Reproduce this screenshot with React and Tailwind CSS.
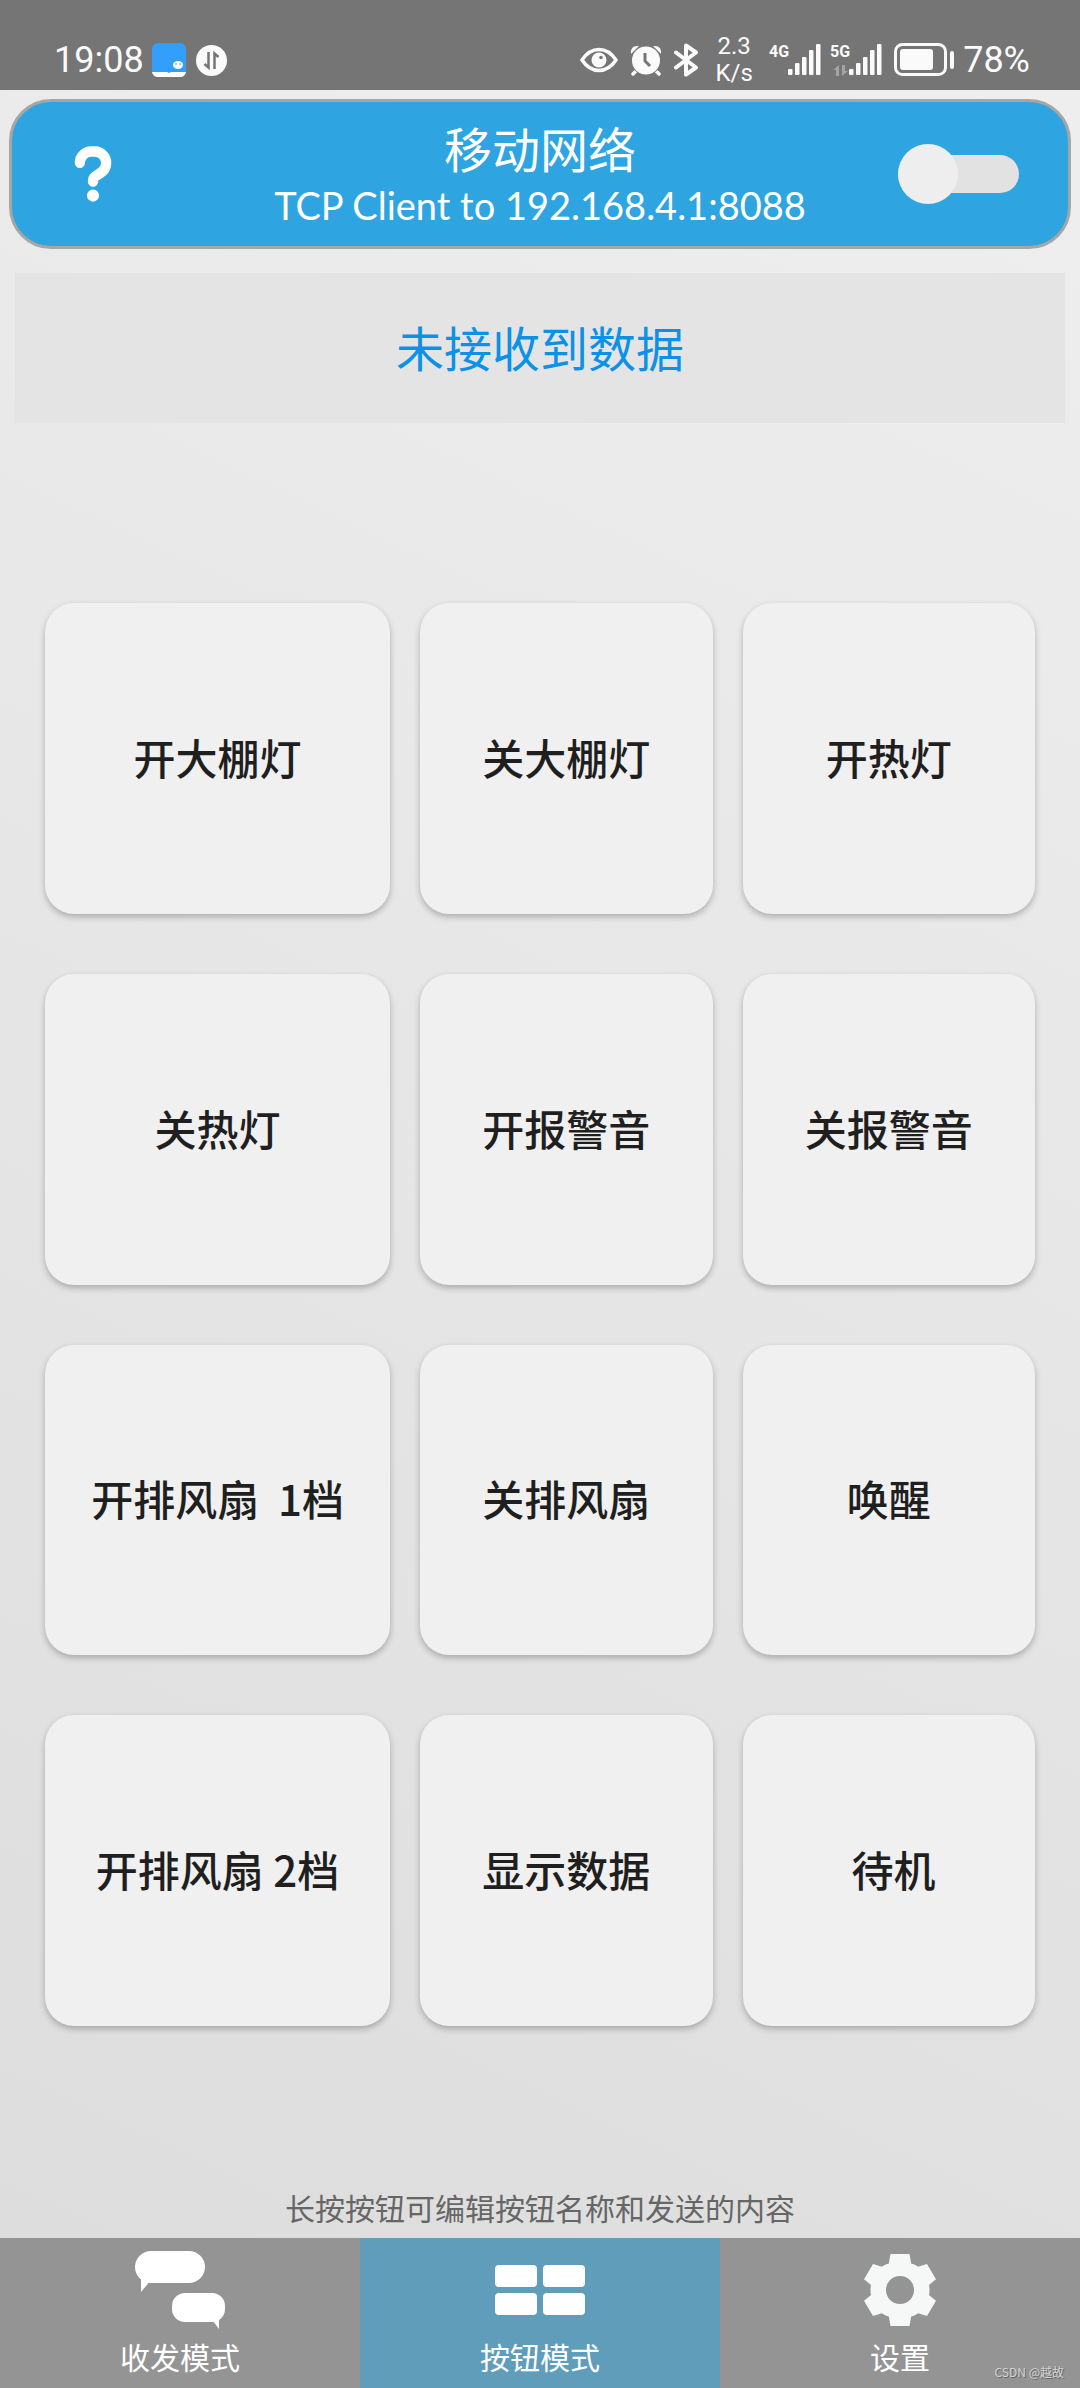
import { useState } from "react";
import { FaQuestion } from "react-icons/fa6";

const COMMANDS = [
  "开大棚灯", "关大棚灯", "开热灯",
  "关热灯", "开报警音", "关报警音",
  "开排风扇  1档", "关排风扇", "唤醒",
  "开排风扇 2档", "显示数据", " 待机",
];

const TABS = [
  { id: "chat", label: "收发模式", icon: ChatIcon },
  { id: "buttons", label: "按钮模式", icon: ButtonsIcon },
  { id: "settings", label: "设置", icon: GearIcon },
];

function ChatIcon() {
  return (
    <svg width="90" height="78" viewBox="0 0 90 78" fill="#fff" aria-hidden="true">
      <rect width="70" height="32" rx="16" />
      <path d="M6 26v15l10-12z" />
      <rect x="37" y="42" width="53" height="29" rx="13" />
      <path d="M84 64v14l-9-12z" />
    </svg>
  );
}

function ButtonsIcon() {
  return (
    <svg width="90" height="50" viewBox="0 0 90 50" fill="#fff" aria-hidden="true">
      <rect width="42" height="22" rx="4" />
      <rect x="48" width="42" height="22" rx="4" />
      <rect y="28" width="42" height="22" rx="4" />
      <rect x="48" y="28" width="42" height="22" rx="4" />
    </svg>
  );
}

function GearIcon() {
  return (
    <svg width="72" height="72" viewBox="-36 -36 72 72" fill="#f5f8f7" aria-hidden="true">
      <path
        fillRule="evenodd"
        d="M-9.5-36H9.5L11.2-26.5Q15-25.5 18.2-23.3L27-26 36-10.7 29-5Q30 0 29 5L36 10.7 27 26 18.2 23.3Q15 25.5 11.2 26.5L9.5 36H-9.5L-11.2 26.5Q-15 25.5-18.2 23.3L-27 26-36 10.7-29 5Q-30 0-29-5L-36-10.7-27-26-18.2-23.3Q-15-25.5-11.2-26.5ZM0-14A14 14 0 1 0 0 14A14 14 0 1 0 0-14Z"
      />
    </svg>
  );
}

function Signal({ label, transfer }) {
  return (
    <div className="flex h-8">
      <div className="flex w-[18px] flex-col items-center justify-between text-base leading-4 font-bold">
        {label}
        {transfer && (
          <svg width="15" height="11" viewBox="0 0 15 11" fill="#a3a3a3" aria-hidden="true">
            <path d="M0 5L6 0v11H3V5zM15 6L9 11V0h3v6z" />
          </svg>
        )}
      </div>
      <svg width="33" height="32" viewBox="0 0 33 32" fill="#fafafa" aria-hidden="true">
        <rect y="25" width="4.5" height="6" rx="1" />
        <rect x="7" y="19" width="4.5" height="12" rx="1" />
        <rect x="14" y="13" width="4.5" height="18" rx="1" />
        <rect x="21" y="6" width="4.5" height="25" rx="1" />
        <rect x="28" width="4.5" height="31" rx="1" />
      </svg>
    </div>
  );
}

function StatusBar() {
  return (
    <div className="flex h-[90px] items-center justify-between bg-[#757575] pt-[30px] pr-[50px] pl-[54px] font-['Roboto',sans-serif] text-[#fafafa]">
      <div className="flex items-center">
        <span className="text-4xl">19:08</span>
        <svg className="ml-2" width="34" height="34" viewBox="0 0 34 34" aria-hidden="true">
          <rect width="34" height="34" rx="6" fill="#329ffb" />
          <path d="M0 29h15l2 1 2-1h15q-1 5-6 5H6q-5 0-6-5z" fill="#fff" />
          <ellipse cx="26" cy="22" rx="5" ry="4" fill="#fff" />
          <circle cx="24" cy="21" r="0.7" fill="#555" />
          <circle cx="28" cy="21" r="0.7" fill="#555" />
        </svg>
        <svg className="ml-[10px]" width="31" height="31" viewBox="0 0 31 31" fill="none" aria-hidden="true">
          <circle cx="15.5" cy="15.5" r="15.5" fill="#fafafa" />
          <path d="M12.5 7v15.5L8.5 19M18.5 24V8.5L22.5 12" stroke="#757575" strokeWidth="2.5" />
        </svg>
      </div>

      <div className="flex items-center">
        <svg width="38" height="26" viewBox="0 0 38 26" fill="none" aria-hidden="true">
          <path d="M2 13Q9 2.5 19 2.5T36 13Q29 23.5 19 23.5T2 13z" stroke="#fafafa" strokeWidth="3.5" strokeLinejoin="round" />
          <circle cx="19" cy="13" r="7.5" fill="#fafafa" />
          <circle cx="21" cy="10.5" r="1.8" fill="#757575" />
        </svg>
        <svg className="ml-3" width="32" height="31" viewBox="0 0 32 31" fill="none" aria-hidden="true">
          <path d="M7 25l-4 4M25 25l4 4" stroke="#fafafa" strokeWidth="3.5" strokeLinecap="round" />
          <path d="M1 9Q0 0 9 1zM31 9Q32 0 23 1z" fill="#fafafa" />
          <circle cx="16" cy="15.5" r="15" fill="#757575" />
          <circle cx="16" cy="15.5" r="14" fill="#fafafa" />
          <path d="M15 8v8l5 5" stroke="#757575" strokeWidth="3" />
        </svg>
        <svg className="ml-3" width="24" height="34" viewBox="0 0 24 34" fill="none" aria-hidden="true">
          <path d="M2 9.5l20 15-10 7V2.5l10 7L2 24.5" stroke="#fafafa" strokeWidth="4" strokeLinejoin="round" strokeLinecap="round" />
        </svg>
        <div className="ml-4 w-10 text-center text-2xl leading-[27px]">
          2.3
          <br />
          K/s
        </div>
        <div className="ml-4">
          <Signal label="4G" />
        </div>
        <div className="ml-[10px]">
          <Signal label="5G" transfer />
        </div>
        <svg className="ml-3" width="61" height="34" viewBox="0 0 61 34" fill="none" aria-hidden="true">
          <rect x="1.5" y="1.5" width="50" height="30" rx="7" stroke="#fafafa" strokeWidth="3" />
          <rect x="6" y="6" width="33" height="21" rx="3" fill="#fafafa" />
          <rect x="56" y="8" width="4" height="18" rx="2" fill="#fafafa" />
        </svg>
        <span className="ml-2 text-4xl">78%</span>
      </div>
    </div>
  );
}

export default function App() {
  const [connected, setConnected] = useState(false);
  const [tab, setTab] = useState("buttons");

  return (
    <div className="relative flex min-h-screen flex-col bg-[linear-gradient(205deg,#efefef,#dcdcdc)] font-['Noto_Sans_CJK_SC',sans-serif]">
      <StatusBar />

      <header className="mx-[9px] mt-[9px] grid h-[150px] grid-cols-[1fr_auto_1fr] items-center rounded-[42px] border-3 border-[#a6a6a6] bg-[#2ea5e1] pr-[49px] pl-[62px] text-white">
        <button type="button" aria-label="帮助" className="justify-self-start">
          <FaQuestion className="h-[60px] w-[38px] overflow-visible stroke-white stroke-[24px]" />
        </button>
        <div className="pt-0.5 pr-[13px] text-center">
          <h1 className="text-5xl leading-[60px]">移动网络</h1>
          <p className="font-['Lato',sans-serif] text-[38px] leading-[56px]">TCP Client to 192.168.4.1:8088</p>
        </div>
        <label className="flex h-[38px] w-[121px] items-center justify-self-end rounded-full bg-[#e2e2e2]">
          <input
            type="checkbox"
            role="switch"
            aria-label="连接"
            className="sr-only"
            checked={connected}
            onChange={(e) => setConnected(e.target.checked)}
          />
          <span className={`size-[60px] rounded-full bg-[#eee] ${connected ? "ml-auto" : ""}`} />
        </label>
      </header>

      <div className="mx-[15px] mt-6 flex h-[150px] items-center justify-center bg-[#e4e4e4] pb-1 text-5xl text-[#0b91e6]">
        未接收到数据
      </div>

      <main className="mx-[45px] mt-[180px] mb-[163px] grid flex-1 auto-rows-fr grid-cols-[1.18fr_1fr_1fr] gap-x-[30px] gap-y-[60px]">
        {COMMANDS.map((name) => (
          <button
            key={name}
            type="button"
            className="rounded-[29px] bg-[#f0f0f0] pb-1 text-[42px] font-medium whitespace-pre text-[#1f1f1f] shadow-[0_3px_6px_rgba(0,0,0,0.25)]"
          >
            {name}
          </button>
        ))}
      </main>

      <p className="pb-[13px] text-center text-3xl leading-9 text-[#666]">长按按钮可编辑按钮名称和发送的内容</p>

      <nav className="grid h-[150px] grid-cols-3 text-white">
        {TABS.map((item) => (
          <button
            key={item.id}
            type="button"
            onClick={() => setTab(item.id)}
            className={`flex flex-col items-center pt-1 text-3xl leading-9 ${tab === item.id ? "bg-[#609dbb]" : "bg-[#949494]"}`}
          >
            <span className="flex h-24 items-center">
              <item.icon />
            </span>
            {item.label}
          </button>
        ))}
      </nav>

      <span className="absolute right-4 bottom-2 text-xs text-[#d4d4d4] text-shadow-[1px_1px_0_#666]">CSDN @越故</span>
    </div>
  );
}
